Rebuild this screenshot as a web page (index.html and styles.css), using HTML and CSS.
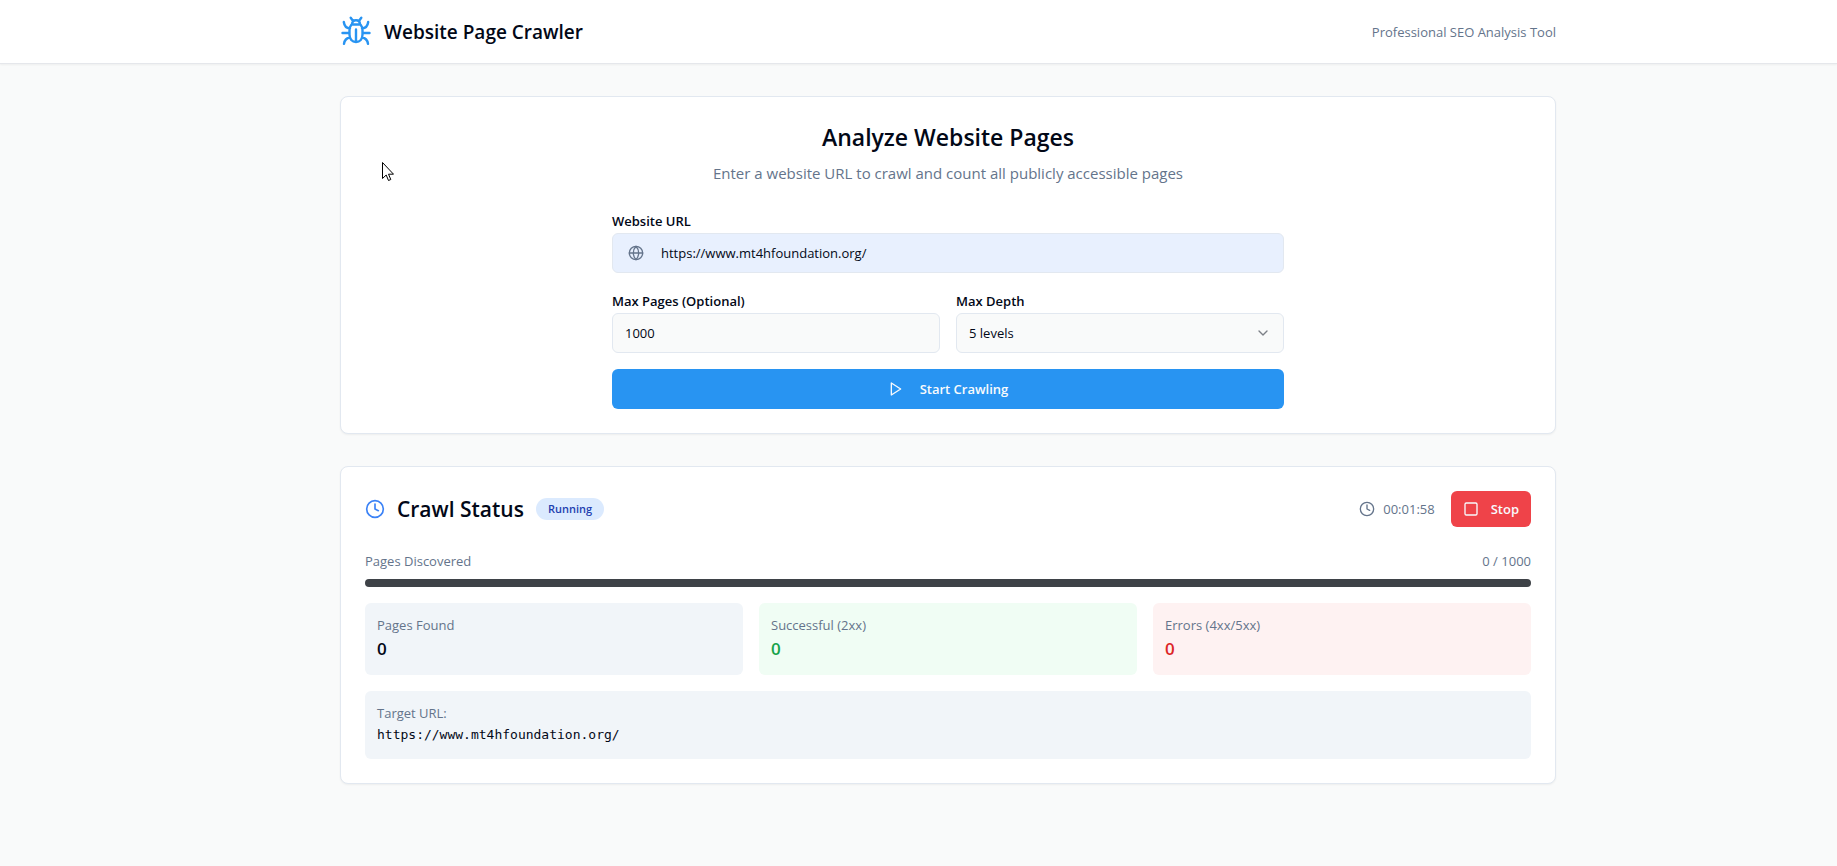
FILE: index.html
```html
<!DOCTYPE html>
<html lang="en">
<head>
<meta charset="utf-8">
<title>Website Page Crawler</title>
<meta name="viewport" content="width=device-width, initial-scale=1">
<link rel="stylesheet" href="styles.css">
</head>
<body>
<header class="topbar">
  <div class="container topbar-row">
    <div class="brand">
      <svg class="icon brand-icon" viewBox="0 0 32 32" aria-hidden="true"><path d="M11.500 8.500h9c1.300 1.500 2 3.500 2 6v4c0 4.700-2.600 7.500-6.500 7.500s-6.500-2.800-6.500-7.500v-4c0-2.500.7-4.500 2-6zM16 13.500v11M12 8.500c0-2.800 1.600-4.200 4-4.200s4 1.400 4 4.200M13 5l-2.300-3.200M19 5l2.300-3.200M9.500 17H2.500M22.500 17h7M10 12.500c-3.500-.3-5.700-2.500-6.200-6.500M22 12.500c3.500-.3 5.700-2.500 6.200-6.500M10 21.500C6.500 22 4.500 24 4 27.800M22 21.500c3.500.5 5.500 2.500 6 6.300"/></svg>
      <h1 class="brand-name">Website Page Crawler</h1>
    </div>
    <span class="muted">Professional SEO Analysis Tool</span>
  </div>
</header>
<main class="page">
  <div class="container stack">
    <section class="card">
      <div class="intro">
        <h2 class="title">Analyze Website Pages</h2>
        <p class="lead">Enter a website URL to crawl and count all publicly accessible pages</p>
      </div>
      <form class="form">
        <div class="field">
          <label for="url">Website URL</label>
          <div class="control">
            <svg class="icon icon-sm control-icon" viewBox="0 0 24 24" aria-hidden="true"><circle cx="12" cy="12" r="10"/><path d="M12 2a14.500 14.500 0 0 0 0 20 14.500 14.500 0 0 0 0-20M2 12h20"/></svg>
            <input class="input input-url" id="url" type="url" value="https://www.mt4hfoundation.org/">
          </div>
        </div>
        <div class="pair">
          <div class="field">
            <label for="pages">Max Pages (Optional)</label>
            <input class="input" id="pages" type="text" inputmode="numeric" value="1000">
          </div>
          <div class="field">
            <label for="depth">Max Depth</label>
            <div class="control">
              <select class="input" id="depth"><option>5 levels</option></select>
              <svg class="icon icon-sm chevron" viewBox="0 0 24 24" aria-hidden="true"><path d="m6 9 6 6 6-6"/></svg>
            </div>
          </div>
        </div>
        <button class="button primary" type="button">
          <svg class="icon icon-sm" viewBox="0 0 24 24" aria-hidden="true"><path d="M5 3 19 12 5 21z"/></svg>
          Start Crawling
        </button>
      </form>
    </section>

    <section class="card">
      <div class="row status-head">
        <div class="status-title">
          <svg class="icon icon-md" viewBox="0 0 24 24" aria-hidden="true"><circle cx="12" cy="12" r="10"/><path d="M12 6v6l4 2"/></svg>
          <h2 class="title title-compact">Crawl Status</h2>
          <span class="badge">Running</span>
        </div>
        <div class="status-actions">
          <span class="timer muted">
            <svg class="icon icon-sm" viewBox="0 0 24 24" aria-hidden="true"><circle cx="12" cy="12" r="10"/><path d="M12 6v6l4 2"/></svg>
            00:01:58
          </span>
          <button class="button danger" type="button">
            <svg class="icon icon-sm" viewBox="0 0 24 24" aria-hidden="true"><rect x="3" y="3" width="18" height="18" rx="2"/></svg>
            Stop
          </button>
        </div>
      </div>
      <div class="row muted"><span>Pages Discovered</span><span>0 / 1000</span></div>
      <div class="progress" role="progressbar" aria-label="Pages discovered" aria-valuemin="0" aria-valuemax="1000" aria-valuenow="0"></div>
      <div class="stats">
        <div class="tile"><div class="muted">Pages Found</div><div class="count">0</div></div>
        <div class="tile success"><div class="muted">Successful (2xx)</div><div class="count">0</div></div>
        <div class="tile failure"><div class="muted">Errors (4xx/5xx)</div><div class="count">0</div></div>
      </div>
      <div class="tile">
        <div class="muted">Target URL:</div>
        <div class="target">https://www.mt4hfoundation.org/</div>
      </div>
    </section>
  </div>
</main>
<svg class="pointer" viewBox="0 0 12 19" aria-hidden="true"><path d="M.5.5v16l3.700-3.500 2.300 5.500 2.300-1-2.300-5.300h5z"/></svg>
</body>
</html>
```
FILE: styles.css
```css
* { box-sizing: border-box; }

body {
  margin: 0;
  min-height: 100vh;
  background: #f9fafa;
  color: #020817;
  font: 15px/24px "Open Sans", "Noto Sans", sans-serif;
}

h1, h2, p { margin: 0; }

.topbar, .page { padding-left: 59px; }

.topbar {
  background: #fff;
  border-bottom: 1px solid #e5e7eb;
  box-shadow: 0 1px 2px rgba(0, 0, 0, .05);
}

.container { max-width: 1216px; margin: 0 auto; }

.topbar-row, .row {
  display: flex;
  align-items: center;
  justify-content: space-between;
}

.topbar-row { height: 63px; }

.brand { display: flex; align-items: center; gap: 12px; }
.brand-name { font-size: 19px; line-height: 28px; font-weight: 600; }

.icon {
  flex: none;
  fill: none;
  stroke: currentColor;
  stroke-width: 2;
  stroke-linecap: round;
  stroke-linejoin: round;
}
.icon-sm { width: 16px; height: 16px; }
.icon-md { width: 20px; height: 20px; color: #3b82f6; }
.brand-icon { width: 32px; height: 32px; color: #2894f2; stroke-width: 2.4; }

.muted { color: #64748b; font-size: 13px; line-height: 20px; }

.page { padding-top: 32px; padding-bottom: 32px; }
.stack { display: grid; gap: 32px; }

.card {
  padding: 24px;
  background: #fff;
  border: 1px solid #e2e8f0;
  border-radius: 8px;
  box-shadow: 0 1px 2px rgba(0, 0, 0, .05);
}

.intro { text-align: center; margin-bottom: 24px; }
.title { font-size: 23px; line-height: 32px; font-weight: 600; }
.title-compact { font-size: 21px; }
.lead { margin-top: 8px; color: #64748b; }

.form { display: grid; gap: 16px; max-width: 672px; margin: 0 auto; }
.pair { display: grid; grid-template-columns: 1fr 1fr; gap: 16px; }
.field label { display: block; font-size: 13px; line-height: 24px; font-weight: 600; }
.control { position: relative; }

.input {
  display: block;
  width: 100%;
  height: 40px;
  padding: 0 12px;
  appearance: none;
  color: inherit;
  background: #f9fafa;
  border: 1px solid #e2e8f0;
  border-radius: 6px;
  font: 13px/20px "Open Sans", "Noto Sans", sans-serif;
}
.input-url { padding-left: 48px; background: #e8f0fe; }
.control-icon { position: absolute; left: 16px; top: 12px; color: #64748b; }
.chevron { position: absolute; right: 13px; top: 12px; opacity: .5; pointer-events: none; }

.button {
  display: flex;
  align-items: center;
  justify-content: center;
  border: 0;
  border-radius: 6px;
  color: #f8fafc;
  font: 600 13px/20px "Open Sans", "Noto Sans", sans-serif;
}
.primary { height: 40px; gap: 16px; background: #2894f2; }
.danger { height: 36px; gap: 12px; padding: 0 12px; background: #ef4349; }

.status-head { margin-bottom: 24px; }
.status-title, .status-actions, .timer { display: flex; align-items: center; }
.status-title { gap: 12px; }
.status-actions { gap: 16px; }
.timer { gap: 8px; }

.badge {
  padding: 3px 12px;
  border-radius: 11px;
  background: #dbeafe;
  color: #1e40af;
  font-size: 11px;
  line-height: 16px;
  font-weight: 600;
}

.progress { height: 8px; margin: 8px 0 16px; border-radius: 4px; background: #3e4247; }

.stats { display: grid; grid-template-columns: repeat(3, 1fr); gap: 16px; margin-bottom: 16px; }
.tile { padding: 12px; border-radius: 6px; background: #f1f5f9; }
.count { font-size: 17px; line-height: 28px; font-weight: 600; }
.success { background: #f0fdf4; }
.success .count { color: #16a34a; }
.failure { background: #fef2f2; }
.failure .count { color: #dc2626; }
.target { font-family: "DejaVu Sans Mono", monospace; font-size: 13px; line-height: 24px; }

.pointer {
  position: absolute;
  left: 382px;
  top: 162px;
  width: 12px;
  height: 19px;
  fill: #fff;
  stroke: #000;
  stroke-width: 1;
  pointer-events: none;
}
```
